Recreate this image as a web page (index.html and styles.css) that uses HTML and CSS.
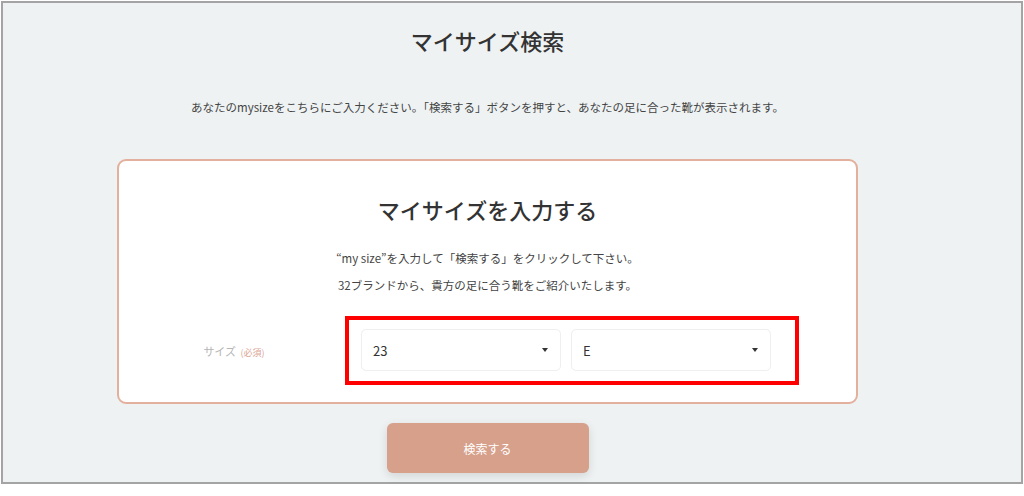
FILE: index.html
```html
<!DOCTYPE html>
<html lang="ja">
<head>
  <meta charset="UTF-8" />
  <meta name="viewport" content="width=device-width,initial-scale=1.0" />
  <title>マイサイズ検索</title>
  <link rel="stylesheet" href="styles.css">
</head>
<body>
  <div class="page">
    <h1 class="page-title">マイサイズ検索</h1>
    <p class="lead">あなたのmysizeをこちらにご入力ください。「検索する」ボタンを押すと、あなたの足に合った靴が表示されます。</p>

    <div class="size-card">
      <h2>マイサイズを入力する</h2>
      <p class="note">“my size”を入力して「検索する」をクリックして下さい。</p>
      <p class="note">32ブランドから、貴方の足に合う靴をご紹介いたします。</p>

      <div class="form-row">
        <div class="form-label">サイズ <span class="required">(必須)</span></div>
        <div class="select-group">
          <div class="select-box">
            <span>23</span>
            <span class="caret"></span>
          </div>
          <div class="select-box">
            <span>E</span>
            <span class="caret"></span>
          </div>
        </div>
      </div>
    </div>

    <button class="btn-search">検索する</button>
  </div>
</body>
</html>
```

FILE: styles.css
```css
body {
  margin: 0;
  background-color: #fff;
  font-family: "Noto Sans CJK JP", "Noto Sans", sans-serif;
  color: #333;
}
.page {
  margin: 1px 1px 0;
  height: 483px;
  box-sizing: border-box;
  border: 2px solid #a4a4a4;
  background-color: #eef2f3;
  padding-right: 49px;
  display: flex;
  flex-direction: column;
  align-items: center;
}
.page-title {
  margin: 21px 0 0;
  font-size: 22px;
  line-height: 33px;
  font-weight: 500;
  color: #333;
}
.lead {
  margin: 41px 0 0;
  font-size: 11.5px;
  line-height: 18px;
  color: #444;
}
.size-card {
  margin-top: 43px;
  width: 741px;
  height: 245px;
  box-sizing: border-box;
  background-color: #fff;
  border: 2px solid #e2b09c;
  border-radius: 9px;
  padding-top: 32px;
  display: flex;
  flex-direction: column;
  align-items: center;
}
.size-card h2 {
  margin: 0;
  font-size: 22px;
  line-height: 33px;
  font-weight: 500;
  color: #333;
}
.note {
  margin: 0;
  font-size: 11.5px;
  line-height: 27px;
  color: #444;
}
.size-card h2 + .note { margin-top: 19px; }
.form-row {
  align-self: stretch;
  display: flex;
  align-items: center;
  margin-top: 17px;
}
.form-label {
  width: 230px;
  text-align: center;
  font-size: 11px;
  color: #b5b5b5;
}
.required {
  margin-left: 2px;
  font-size: 9px;
  color: #dba697;
}
.select-group {
  display: flex;
  gap: 10px;
  border: 4px solid #f00;
  padding: 9px 24px 10px 12px;
  margin-left: -4px;
}
.select-box {
  width: 200px;
  height: 42px;
  box-sizing: border-box;
  border: 1px solid #efefef;
  border-radius: 5px;
  background-color: #fff;
  padding: 0 12px 0 11px;
  display: flex;
  align-items: center;
  justify-content: space-between;
  font-size: 13px;
  color: #333;
}
.caret {
  width: 0;
  height: 0;
  border-left: 3px solid transparent;
  border-right: 3px solid transparent;
  border-top: 4px solid #333;
}
.btn-search {
  margin-top: 19px;
  width: 202px;
  height: 50px;
  border: none;
  border-radius: 6px;
  background-color: #d6a08b;
  color: #fff;
  font-family: inherit;
  font-size: 12px;
  box-shadow: 0 3px 10px rgba(0,0,0,0.12);
}
```
